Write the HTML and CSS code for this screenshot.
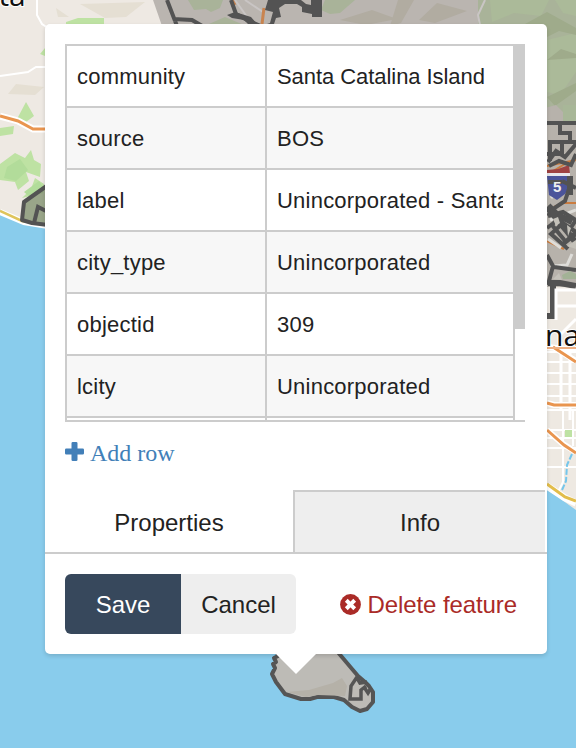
FILE: index.html
```html
<!DOCTYPE html>
<html lang="en">
<head>
<meta charset="utf-8">
<title>Feature properties</title>
<link rel="stylesheet" href="styles.css">
</head>
<body>
<svg class="map" viewBox="0 0 576 748" aria-hidden="true">
  <rect width="576" height="748" fill="#89ccec"/>
  <!-- Western coast -->
  <path fill="#eee9e3" d="M0 0H200V225H45L20 220 0 210Z"/>
  <path fill="#e5dfd3" d="M16 84 44 87 35 95 8 94ZM56 8 69 17 58 17ZM80 4 145 2 126 17 105 18Z"/>
  <path fill="#bee2a3" d="M66 22 78 18H104V28H66ZM40 54 45 48V56ZM17 119 26 102 34 116 26 122ZM0 128 14 126 13 134 0 136ZM0 164 15 153 25 158 31 150 34 160 41 164 40 177 26 172 29 181 18 190 15 182 0 180ZM22 198 31 189 35 178 44 184 43 193Z"/>
  <path fill="#b2dc9a" d="M7 167 20 159 28 170 16 181 4 178ZM24 192 39 181 43 187 31 198Z"/>
  <g fill="none" stroke="#fff" stroke-width="2">
    <path d="M37 0V15L42 24 48 28M0 76 28 72 36 67H48"/>
    <path stroke-width="7" d="M0 116 18 121 33 129H48"/>
    <path stroke-width="6" d="M0 212 24 222 48 226"/>
  </g>
  <path fill="none" stroke="#e9954f" stroke-width="3" d="M0 116 18 121 33 129H48"/>
  <path fill="none" stroke="#dfc45b" stroke-width="2.500" d="M0 211 22 221 48 225"/>
  <path fill="#7c8e6b" fill-opacity=".75" stroke="#535353" stroke-width="4" stroke-linejoin="round" d="M48 185 24 202 22 220 32 223 48 225"/>
  <path fill="none" stroke="#535353" stroke-width="4" d="M34 223 38 207 48 212"/>
  <!-- Northern hills -->
  <path fill="#bab5b0" d="M152 0H576V30H161Z"/>
  <path fill="#eee9e3" d="M150 0H153L162 26H150Z"/>
  <path fill="#a9b399" d="M188 0H223L220 8 211 12 206 9 194 10ZM202 27 225 17 244 25 231 30ZM325 0H355L340 13 330 14 321 10ZM478 0H576V135H547V24H478V14Z"/>
  <path fill="#abba99" d="M490 0H549L541 16 514 13 492 22ZM547 40 576 33V72L560 95 547 92ZM555 0H576V16L563 13Z"/>
  <path fill="#9fab8b" d="M525 24 547 12 576 28V35L559 31 547 37ZM547 97 576 83V91L555 106ZM547 60 561 49 576 54V58Z"/>
  <path fill="#b1aca1" d="M340 20 372 10 397 19 366 25ZM398 0 414 0 401 23 390 26ZM437 3 467 11 435 23 419 20Z"/>
  <path fill="none" stroke="#c9c5c4" stroke-width="2" d="M235 0 255 28M245 0 263 12M485 0 478 15 480 25"/>
  <path fill="none" stroke="#c9844f" stroke-width="3" d="M232 0 235 5M264 8 262 24"/>
  <path fill="none" stroke="#535353" stroke-width="4" d="M167 0 177 26M173 19 192 20 204 27M231 0 236 14 249 21 263 27"/>
  <path fill="#535353" d="M227 15 235 12 251 17 257 24 264 25 270 23 273 12 265 10 268 0H301L306 4 311 5V0H322V17H312V14L302 12V7L297 4H285L279 8 281 17 276 18 273 27H251L244 20 232 18ZM345 25H348V28H345Z"/>
  <!-- Eastern neighbourhoods -->
  <path fill="#eee9e2" d="M545 285H576V510L562 500 545 488Z"/>
  <path fill="#b7b2ab" d="M545 108 556 105 563 112V121H576V287H545Z"/>
  <path fill="#a8b798" d="M563 105H576V121H563Z"/>
  <g fill="none" stroke="#cb7c3f" stroke-width="2">
    <path d="M547 166 576 160M554 207 563 203H576M547 241 564 249M550 173 565 164 576 160"/>
  </g>
  <path fill="none" stroke="#deddd9" stroke-width="3" d="M551 198 568 180M548 239 561 248M553 266 567 265 572 254M550 220 576 210"/>
  <path fill="#9f4242" d="M547 170 558 169 569 165 570 174H547Z"/>
  <path fill="#e8e7eb" d="M547 173H570V176H547Z"/>
  <path fill="#4b549a" d="M547 176H570L571 185 565 194 557 200 549 195Z"/>
  <g fill="none" stroke="#535353" stroke-width="4">
    <path d="M547 123H576M560 123V133H570V142M550 161V142H576M547 154H562V143M548 162 556 151 565 157 576 144M549 166 559 161 571 165 576 154M562 182H548M562 181 576 188M570 186 565 201 553 209 548 216M548 216 563 212 576 220M547 228 559 219 570 229 576 220M549 205 560 216 552 225 566 242 576 234M563 244 576 232 563 223 551 234 568 249M547 255 553 266 548 285M554 267 576 270"/>
    <path stroke-width="6" d="M548 283H560L576 286M553 286V316H547"/>
    <path stroke-width="6" d="M547 207 566 230 576 243M558 215 572 222M570 176V195"/>
  </g>
  <text class="shield" x="553" y="192">5</text>
  <path fill="#c4c1b9" d="M553 219 558 217 560 223 556 226ZM567 225 571 228 568 236ZM553 279 559 273 562 280ZM567 246 576 240V249Z"/>
  <path fill="#a3b296" d="M562 275 570 271 576 274V279H563Z"/>
  <g fill="none" stroke="#fff" stroke-width="2">
    <path stroke-width="3" d="M556 320V290H576M556 306H576M561 342V410M570 342V420M560 335 576 319"/>
    <path d="M547 352H576M547 362H576M547 373H576M547 384H576M547 396H576M547 410H576M563 410V482L558 492M573 410V446M547 430H576M547 438H576M547 448H576M547 467H576"/>
    <path stroke-width="6" d="M547 347 576 350M553 347 576 361M547 403 554 405H576M547 430 563 444 576 452"/>
    <path stroke-width="7" d="M547 486 565 498 576 503"/>
  </g>
  <path fill="none" stroke="#e9954f" stroke-width="3" d="M553 347 576 362M547 403 554 405H576M547 430 564 445 576 453"/>
  <path fill="none" stroke="#efb082" stroke-width="2" d="M547 348H576"/>
  <path fill="#bee2a3" d="M565 430H572V437H565Z"/>
  <path fill="none" stroke="#75c6eb" stroke-width="2" stroke-dasharray="6 2" d="M572 454 567 465 566 481 562 490"/>
  <path fill="none" stroke="#e2bd4b" stroke-width="3" d="M547 484 565 497 576 501"/>
  <text class="place" x="545" y="346">na</text>
  <text class="place" x="-20" y="6">uta</text>
  <!-- Catalina Island -->
  <path fill="#bdbbb6" stroke="#555" stroke-width="4" stroke-linejoin="round" d="M277 650 278 656 274 658 276 662 273 664 275 668 272 674 276 682 285 694 301 699 310 699 317 697H334L344 700 352 707 360 711 367 709 373 702 373 692 369 686 365 682 358 676 336 650Z"/>
  <path fill="#b5b1a8" d="M287 692 309 690 333 683 342 678 347 686 345 696 318 695 306 697Z"/>
  <path fill="none" stroke="#555" stroke-width="3.500" d="M357 677 351 686 350 699H361V690L366 686M357 678 360 683 367 682M364 687 368 693 371 688"/>
</svg>

<main class="popup">
  <div class="table-box">
    <div class="table-scroll">
      <div class="row"><div class="cell">community</div><div class="cell"><span class="compact">Santa Catalina Island</span></div></div>
      <div class="row"><div class="cell">source</div><div class="cell"><span>BOS</span></div></div>
      <div class="row"><div class="cell">label</div><div class="cell"><span>Unincorporated - Santa</span></div></div>
      <div class="row"><div class="cell">city_type</div><div class="cell"><span>Unincorporated</span></div></div>
      <div class="row"><div class="cell">objectid</div><div class="cell"><span>309</span></div></div>
      <div class="row"><div class="cell">lcity</div><div class="cell"><span>Unincorporated</span></div></div>
      <div class="row"><div class="cell"></div><div class="cell"></div></div>
    </div>
    <div class="scroll-thumb"></div>
  </div>
  <a class="add-row">
    <svg width="19" height="19" viewBox="0 0 19 19" aria-hidden="true"><path fill="currentColor" d="M7.800 0h3.400q1.300 0 1.300 1.300v5.200h5.200Q19 6.500 19 7.800v3.400q0 1.300-1.300 1.300h-5.200v5.200q0 1.300-1.300 1.300H7.800q-1.300 0-1.300-1.300v-5.200H1.300Q0 12.500 0 11.200V7.800q0-1.300 1.300-1.300h5.200V1.300Q6.500 0 7.800 0Z"/></svg>
    <span>Add row</span>
  </a>
  <nav class="tabs">
    <div class="tab">Properties</div>
    <div class="tab tab-muted">Info</div>
  </nav>
  <div class="actions">
    <div class="buttons"><button class="save">Save</button><button class="cancel">Cancel</button></div>
    <a class="delete">
      <svg width="21" height="21" viewBox="0 0 21 21" aria-hidden="true"><circle cx="10.500" cy="10.500" r="10.400" fill="currentColor"/><path fill="none" stroke="#fff" stroke-width="4" stroke-linecap="square" stroke-linejoin="round" d="m7.700 7.700 5.600 5.600m0-5.600-5.600 5.600"/></svg>
      <span>Delete feature</span>
    </a>
  </div>
  <div class="tip"></div>
</main>
</body>
</html>
```

FILE: styles.css
```css
* { box-sizing: border-box; }

body {
  margin: 0;
  width: 576px;
  height: 748px;
  overflow: hidden;
  position: relative;
  padding: 24px 29px 0 45px;
  color: #222;
  font: 24px/30px "Liberation Sans", Arial, sans-serif;
}

.map { position: absolute; inset: 0; width: 576px; height: 748px; }
.place { font: 30px "Open Sans", sans-serif; fill: #111; stroke: #fff; stroke-width: 2px; paint-order: stroke; }
.shield { font: bold 15px "Liberation Sans", sans-serif; fill: #eee; }

.popup {
  position: relative;
  width: 502px;
  height: 630px;
  padding-top: 20px;
  background: #fff;
  border-radius: 5px;
  box-shadow: 0 2px 4px rgba(0, 0, 0, .14);
}

.table-box {
  width: 460px;
  height: 378px;
  margin-left: 20px;
  display: flex;
  overflow: hidden;
  border-top: 2px solid #ccc;
  border-bottom: 2px solid #ccc;
}
.table-scroll {
  width: 450px;
  flex: none;
  overflow: hidden;
  border-left: 2px solid #ccc;
  border-right: 2px solid #ccc;
  font-size: 22px;
  letter-spacing: .22px;
}
.row {
  display: grid;
  grid-template-columns: 200px 246px;
  height: 62px;
  border-bottom: 2px solid #ccc;
}
.row:nth-child(even) { background: #f7f7f7; }
.cell { padding: 16px 10px 0; white-space: nowrap; }
.cell:first-child { border-right: 2px solid #ccc; }
.cell span { display: block; overflow: hidden; }
.cell .compact { letter-spacing: -.06px; }
.scroll-thumb {
  flex: none;
  position: relative;
  width: 12px;
  height: 285px;
  margin: -2px 0 0 -2px;
  background: #ccc;
}

.add-row {
  display: flex;
  align-items: center;
  gap: 6px;
  height: 30px;
  margin: 16px 0 0 20px;
  color: #427fb8;
  font-family: "Liberation Serif", "Times New Roman", serif;
}
.add-row svg { margin-top: -3px; }

.tabs { display: flex; height: 64px; margin-top: 22px; border-bottom: 2px solid #ccc; }
.tab { width: 248px; padding-top: 18px; text-align: center; }
.tab-muted {
  width: 252px;
  background: #eee;
  border-top: 2px solid #ccc;
  border-left: 2px solid #ccc;
  padding-top: 16px;
}

.actions { display: flex; align-items: center; justify-content: space-between; padding: 20px 30px 0 20px; }
.buttons { display: flex; width: 231px; height: 60px; border-radius: 6px; overflow: hidden; }
button { border: 0; padding: 2px 0 0; font: inherit; color: #222; background: #eee; }
.save { width: 116px; color: #fff; background: #37485c; }
.cancel { width: 115px; }
.delete { display: flex; align-items: center; gap: 6px; color: #aa2b27; white-space: nowrap; letter-spacing: -.09px; }
.delete span { padding-top: 2px; }

.tip {
  position: absolute;
  left: 231px;
  top: 630px;
  width: 40px;
  height: 20px;
  background: #fff;
  clip-path: polygon(0 0, 100% 0, 50% 100%);
}
```
